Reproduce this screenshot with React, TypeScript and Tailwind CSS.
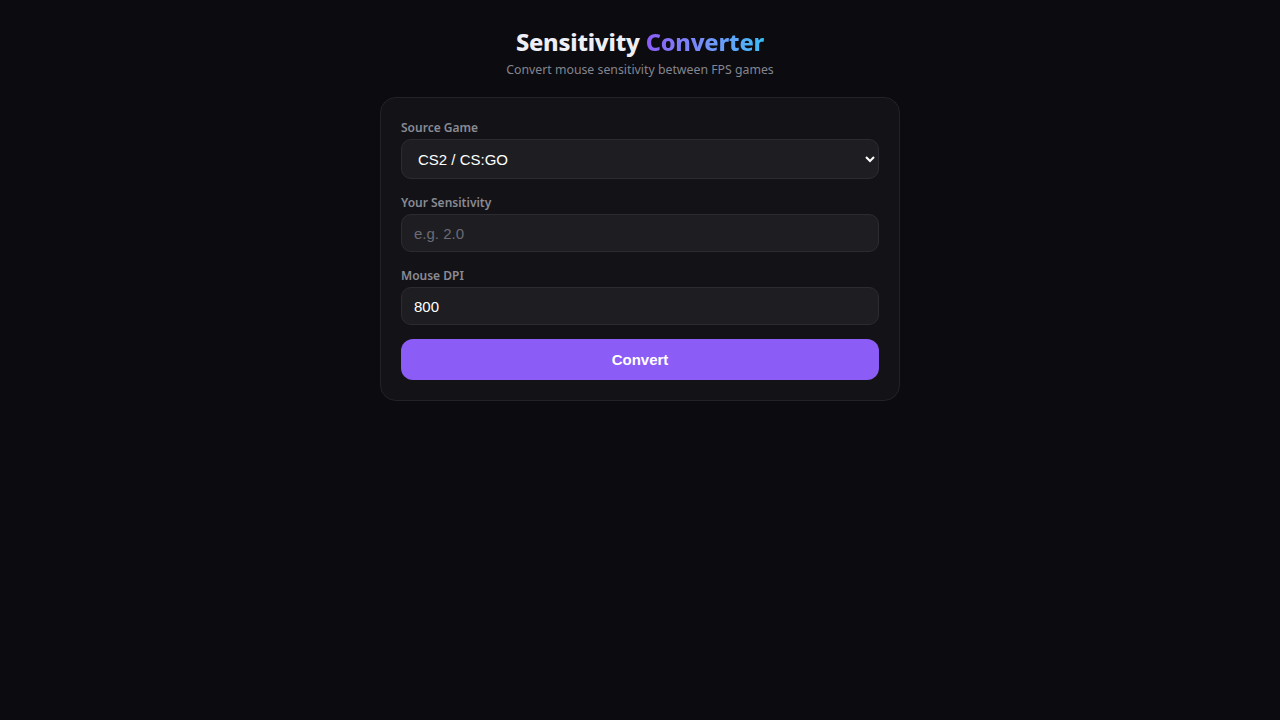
import { useState } from 'react';

const games = ['CS2 / CS:GO', 'Valorant', 'Apex Legends', 'Overwatch 2', 'Fortnite', 'Rainbow Six Siege'];

export default function App() {
    const [game, setGame] = useState(games[0]);
    const [sens, setSens] = useState('');
    const [dpi, setDpi] = useState('800');

    return (
        <div className="min-h-screen w-full bg-[#0b0b10] flex flex-col items-center pt-[26px]" style={{ fontFamily: '"Noto Sans", "Open Sans", sans-serif' }}>
            {/* Header */}
            <h1 className="text-[23.6px] leading-8 font-extrabold tracking-[-0.2px]">
                <span className="text-[#eeeef6]">Sensitivity </span>
                <span className="bg-gradient-to-r from-[#8b5cf6] to-[#38bdf8] bg-clip-text text-transparent">Converter</span>
            </h1>
            <p className="text-[12.3px] leading-5 text-[#85858f] mt-[2px]">Convert mouse sensitivity between FPS games</p>

            {/* Card */}
            <div className="mt-[17px] w-[520px] bg-[#131317] border border-[#222228] rounded-[16px] px-5 pt-[21px] pb-5 flex flex-col">
                <label className="text-[12px] leading-[18px] font-semibold text-[#8a8a94] mb-[2px]">Source Game</label>
                <select
                    value={game}
                    onChange={(e) => setGame(e.target.value)}
                    className="h-10 w-full rounded-[10px] bg-[#1e1e22] border border-[#2b2b31] px-3 text-[15px] text-white outline-none [color-scheme:dark]"
                    style={{ fontFamily: '"Liberation Sans", Arial, sans-serif' }}
                >
                    {games.map((g) => (
                        <option key={g} value={g}>{g}</option>
                    ))}
                </select>

                <label className="mt-[15px] text-[12px] leading-[18px] font-semibold text-[#8a8a94] mb-[2px]">Your Sensitivity</label>
                <input
                    value={sens}
                    onChange={(e) => setSens(e.target.value)}
                    placeholder="e.g. 2.0"
                    className="h-[38px] w-full rounded-[10px] bg-[#1e1e22] border border-[#2b2b31] px-3 text-[15px] text-white placeholder:text-[#6b6b75] outline-none"
                    style={{ fontFamily: '"Liberation Sans", Arial, sans-serif' }}
                />

                <label className="mt-[15px] text-[12px] leading-[18px] font-semibold text-[#8a8a94] mb-[2px]">Mouse DPI</label>
                <input
                    value={dpi}
                    onChange={(e) => setDpi(e.target.value)}
                    className="h-[38px] w-full rounded-[10px] bg-[#1e1e22] border border-[#2b2b31] px-3 text-[15px] text-white outline-none"
                    style={{ fontFamily: '"Liberation Sans", Arial, sans-serif' }}
                />

                <button
                    className="mt-[14px] h-[41px] w-full rounded-[12px] bg-[#8b5cf6] text-white text-[15px] font-bold pt-[1px]"
                    style={{ fontFamily: '"Liberation Sans", Arial, sans-serif' }}
                >
                    Convert
                </button>
            </div>
        </div>
    );
}
